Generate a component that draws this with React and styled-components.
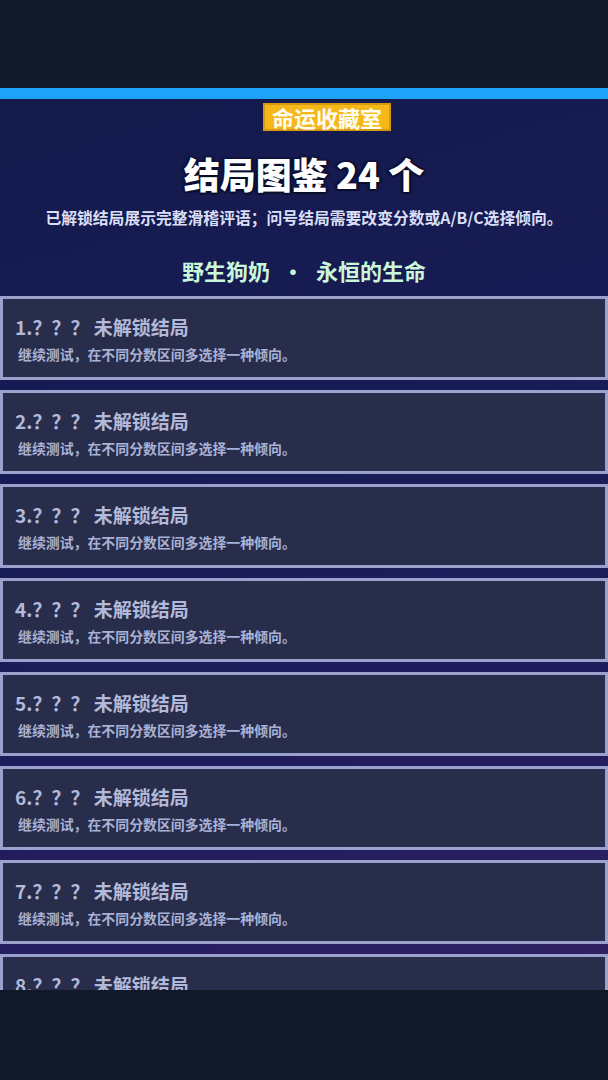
import React from "react";
import styled, { createGlobalStyle } from "styled-components";

const GlobalStyle = createGlobalStyle`
    html, body {
        margin: 0;
        padding: 0;
        background: #111827;
    }
    body {
        font-family: "Noto Sans CJK SC", "Noto Sans", sans-serif;
    }
`;

const Page = styled.div`
    height: 1080px;
    display: flex;
    flex-direction: column;
    background: #111827;
`;

const TopSpace = styled.div`
    height: 88px;
    flex-shrink: 0;
`;

const Frame = styled.div`
    height: 891px;
    overflow: hidden;
    border-top: 11px solid #1fa3f8;
    background: linear-gradient(165deg, #141a4c 0%, #181c57 45%, #221d5e 75%, #2f2163 100%);
    display: flex;
    flex-direction: column;
    align-items: center;
`;

const Badge = styled.div`
    margin: 4px 0 0 46px;
    padding: 0 7px;
    height: 24px;
    line-height: 24px;
    background: #f4b81b;
    border: 2px solid #d69a12;
    color: #fffdf2;
    font-size: 22px;
    font-weight: 700;
`;

const Title = styled.h1`
    margin: 20px 0 0;
    font-size: 36px;
    line-height: 44px;
    font-weight: 900;
    color: #ffffff;
    text-shadow: 0 2px 0 #090d2a, 0 0 3px #090d2a, 2px 0 2px #090d2a, -2px 0 2px #090d2a;
`;

const Hint = styled.p`
    margin: 12px 0 0;
    font-size: 15.8px;
    line-height: 22px;
    font-weight: 700;
    color: #d9dff6;
`;

const Section = styled.h2`
    margin: 26px 0 0;
    font-size: 22px;
    line-height: 30px;
    font-weight: 700;
    color: #caf6da;
`;

const Dot = styled.span`
    margin: 0 12px;
`;

const List = styled.div`
    align-self: stretch;
    margin-top: 11px;
    display: flex;
    flex-direction: column;
    gap: 10px;
`;

const Card = styled.div`
    flex-shrink: 0;
    box-sizing: border-box;
    height: 84px;
    border: 3px solid #9aa1cd;
    background: #282d4b;
    padding: 15px 12px 13px;
    display: flex;
    flex-direction: column;
    gap: 4px;
`;

const CardTitle = styled.div`
    font-size: 19px;
    line-height: 26px;
    font-weight: 700;
    color: #b3b9d9;
`;

const CardText = styled.div`
    padding-left: 3px;
    font-size: 13.9px;
    line-height: 20px;
    font-weight: 700;
    color: #a9b1d5;
`;

const endings = Array.from({ length: 8 }, (_, i) => i + 1);

function App() {
    return (
        <>
            <GlobalStyle />
            <Page>
                <TopSpace />
                <Frame>
                    <Badge>命运收藏室</Badge>
                    <Title>结局图鉴 24 个</Title>
                    <Hint>已解锁结局展示完整滑稽评语；问号结局需要改变分数或A/B/C选择倾向。</Hint>
                    <Section>
                        野生狗奶<Dot>·</Dot>永恒的生命
                    </Section>
                    <List>
                        {endings.map((n) => (
                            <Card key={n}>
                                <CardTitle>{n}.？？？ 未解锁结局</CardTitle>
                                <CardText>继续测试，在不同分数区间多选择一种倾向。</CardText>
                            </Card>
                        ))}
                    </List>
                </Frame>
            </Page>
        </>
    );
}

export default App;
